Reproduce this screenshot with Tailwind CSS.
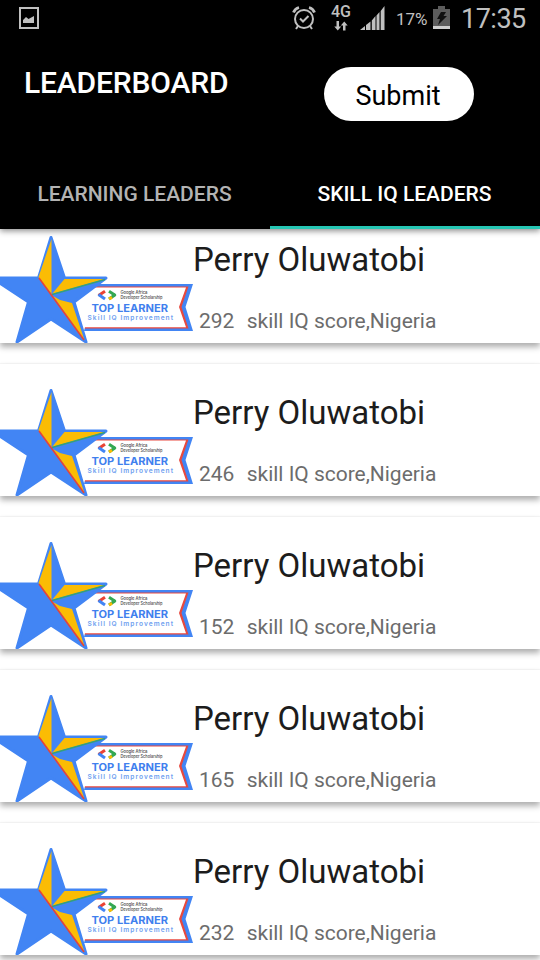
<!DOCTYPE html>
<html lang="en">
<head>
<meta charset="utf-8">
<title>Leaderboard</title>
<script src="https://cdn.jsdelivr.net/npm/@tailwindcss/browser@4"></script>
</head>
<body class="bg-white">
<svg class="hidden">
  <symbol id="badge" viewBox="0 211 200 132">
    <path d="M84 284H193L185.500 307L193 331H84Z" fill="#4285f4"/>
    <path d="M84 286.500H188.500L181.500 307L188.500 328.500H84Z" fill="#e8493e"/>
    <path d="M84 287.500H186L179 307L186 327.200H84Z" fill="#fff"/>
    <path d="M72 284H92V300L84 331L72 310Z" fill="#fff"/>
    <path d="M51 237.500L64.500 278H106L74 302L86 342L51 319L17 342L28.500 302L-8 278H38.500Z" fill="#4285f4" stroke="#4285f4" stroke-width="3" stroke-linejoin="round"/>
    <path d="M51.500 239V294L38.500 277Z" fill="#fbbc04"/>
    <path d="M52 294L64.500 279H105Z" fill="#fbbc04"/>
    <path d="M52 294.500L105 279.500" stroke="#34a07c" stroke-width="1.300"/>
    <path d="M53 296L60 300L72 303L84.500 340Z" fill="#fbbc04"/>
    <path d="M39 278L84 340" stroke="#ea4335" stroke-width="1.500"/>
    <g fill="none" stroke-width="3">
      <path d="M105 291.300L98.500 295.500" stroke="#ea4335"/><path d="M98.500 294.500L105 299" stroke="#4285f4"/>
      <path d="M109 291.300L115.500 295.500" stroke="#34a853"/><path d="M115.500 294.500L109 299" stroke="#34a853"/>
      <path d="M112 297.200L109 299" stroke="#fbbc04"/>
    </g>
    <g font-family="Inter, sans-serif">
      <text x="120.500" y="294" font-size="4.200" font-weight="500" fill="#444" textLength="27">Google Africa</text>
      <text x="120.500" y="299" font-size="4.200" font-weight="500" fill="#444" textLength="42" lengthAdjust="spacingAndGlyphs">Developer Scholarship</text>
      <text x="91.500" y="312" font-size="10" font-weight="700" fill="#3f80ee" textLength="76.500" lengthAdjust="spacingAndGlyphs">TOP LEARNER</text>
      <text x="87.500" y="320.300" font-size="6.600" font-weight="600" fill="#6f9ff0" textLength="85.500">Skill IQ Improvement</text>
    </g>
  </symbol>
</svg>
<div class="flex h-[960px] w-[540px] flex-col overflow-hidden bg-white font-[Roboto,sans-serif]">
  <header class="relative z-10 flex h-[229px] shrink-0 flex-col bg-black shadow-[0_2px_6px_rgba(0,0,0,0.45)]">
    <div class="flex h-[38px] shrink-0 items-center justify-between pl-[19px] pr-[15px] text-[#c0c0c0]">
      <svg class="h-[22px] w-[20px] -translate-y-px" viewBox="0 0 20 22"><path d="M1 1H19V21H1Z" fill="none" stroke="currentColor" stroke-width="2"/><path d="M4 16V13L7 10L9.500 12L15 9V16Z" fill="currentColor"/></svg>
      <div class="flex items-center">
        <svg class="mr-[15px] h-[26px] w-[24px] -translate-y-px" viewBox="0 0 24 26" fill="none" stroke="currentColor" stroke-width="2"><circle cx="12" cy="14" r="9"/><path d="M8 13.500L11 16.500L16.500 11M6 21L4 24M18 21L20 24"/><path d="M1.500 7.500Q3 3.500 7 2.500M17 2.500Q21 3.500 22.500 7.500" stroke-width="2.800"/></svg>
        <div class="mr-[9px] flex w-[20px] flex-col items-center">
          <span class="-mt-[3px] mb-[2px] text-[16px] font-medium leading-[15px]">4G</span>
          <svg class="h-[10px] w-[14px]" viewBox="0 0 14 10" fill="currentColor"><path d="M2.500 0H5V5.500H7.200L3.750 9.500L.3 5.500H2.500ZM9 9.500H11.500V4.500H13.700L10.250 .5L6.800 4.500H9Z"/></svg>
        </div>
        <svg class="mr-[11px] h-[26px] w-[25px] -translate-y-px" viewBox="0 0 25 26" fill="currentColor"><path d="M0 25L5 21V25ZM6 20L10.500 16.500V25H6ZM11.800 15.500L15.500 11V25H11.800ZM16.500 10.500L19.500 7V25H16.500ZM20.700 6L24.500 1V25H20.700Z"/></svg>
        <span class="mr-[5px] w-[32px] whitespace-nowrap text-[17px] leading-5">17%</span>
        <svg class="mr-[11px] h-[25px] w-[17px] -translate-y-[2px]" viewBox="0 0 17 25"><path d="M5 1H12V4H17V21H0V4H5Z" fill="#5c5c5c"/><path d="M0 21H17V24H0Z" fill="#cecece"/><path d="M8 7H13L10.500 11H14L5 20L7 14H4Z" fill="#111"/></svg>
        <span class="w-[64px] whitespace-nowrap text-[27px] leading-7 tracking-[-0.5px]">17:35</span>
      </div>
    </div>
    <div class="flex h-[121px] shrink-0 items-start justify-between pl-[24px] pr-[66px] pt-[29px]">
      <h1 class="pt-[1px] text-[30px] font-medium leading-[30px] tracking-[-0.15px] text-white">LEADERBOARD</h1>
      <button class="h-[54px] w-[150px] rounded-full bg-white pt-[5px] pr-[2px] text-[27px] leading-none text-black">Submit</button>
    </div>
    <nav class="grid h-[70px] grid-cols-2 text-center text-[21px] font-medium leading-[70px]">
      <div class="pr-[1px] text-[#b3b3b3]">LEARNING LEADERS</div>
      <div class="h-[70px] border-b-[3px] border-[#26c6b4] pr-[1px] text-white">SKILL IQ LEADERS</div>
    </nav>
  </header>
  <main id="list" class="-mt-[18px] flex shrink-0 flex-col gap-[21px]"></main>
</div>
<template id="row">
  <article class="flex h-[132px] shrink-0 bg-white shadow-[0_4px_6px_rgba(0,0,0,0.32),0_-1px_1px_rgba(0,0,0,0.03)]">
    <svg class="h-[132px] w-[200px] shrink-0"><use href="#badge"/></svg>
    <div class="-ml-[9px] pt-[29px]">
      <h2 class="whitespace-nowrap pl-[2px] text-[33px] leading-[40px] text-[#1c1c1c]">Perry Oluwatobi</h2>
      <p class="whitespace-pre pl-[8px] pt-[28px] text-[21px] leading-[26px] tracking-[-0.02px] text-[#6c6c6c]"><span class="mr-[2px]"></span>  skill IQ score,Nigeria</p>
    </div>
  </article>
</template>
<script>
  const list = document.getElementById('list');
  for (const score of [292, 246, 152, 165, 232]) {
    const row = document.getElementById('row').content.cloneNode(true);
    row.querySelector('span').textContent = score;
    list.append(row);
  }
</script>
</body>
</html>
